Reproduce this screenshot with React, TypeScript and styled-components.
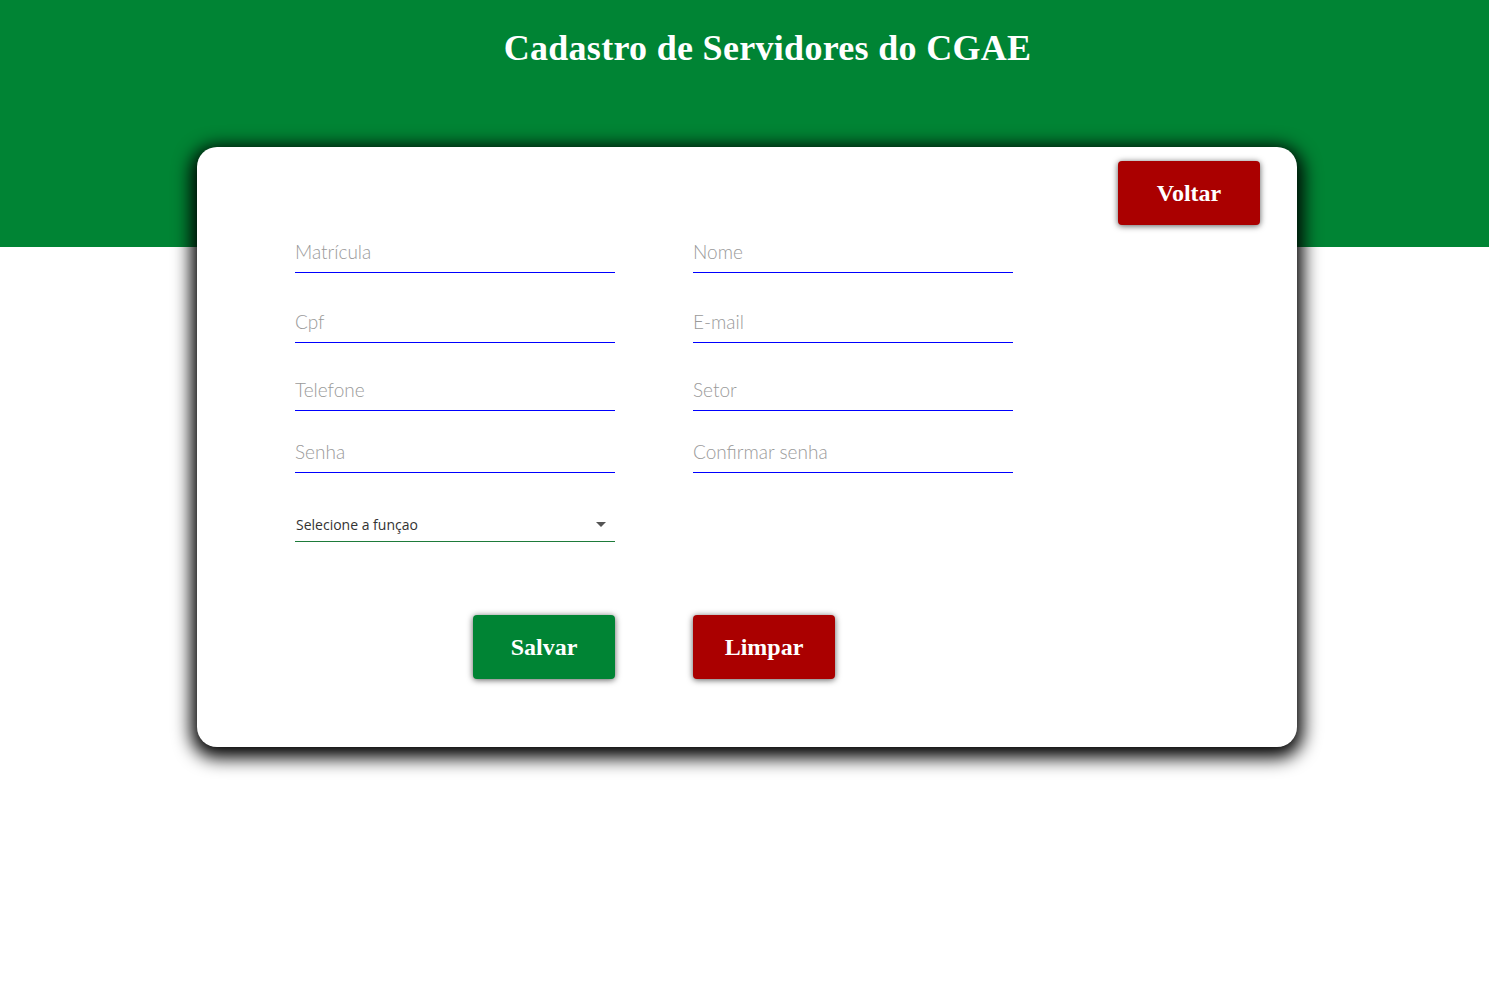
import React from "react";
import styled, { createGlobalStyle } from "styled-components";

const GlobalStyle = createGlobalStyle`
  html, body { margin: 0; padding: 0; background: #ffffff; }
  body { font-family: "Liberation Sans", Arial, sans-serif; }
  * { box-sizing: border-box; }
`;

const Page = styled.div`
  min-height: 997px;
  background: linear-gradient(to bottom, #008434 0, #008434 247px, #ffffff 247px);
  display: flex;
  flex-direction: column;
`;

const Header = styled.header`
  height: 147px;
  padding: 26px 0 0 46px;
  display: flex;
  justify-content: center;
`;

const Title = styled.h1`
  margin: 0;
  font-family: "Liberation Serif", "Times New Roman", serif;
  font-weight: 700;
  font-size: 36px;
  line-height: 44px;
  color: #ffffff;
  letter-spacing: 0.3px;
`;

const Card = styled.main`
  width: 1100px;
  height: 600px;
  margin-left: 197px;
  background: #ffffff;
  border-radius: 20px;
  box-shadow: 0 5px 18px 6px #000000;
  display: flex;
  flex-direction: column;
  padding: 14px 37px 0 98px;
`;

const TopBar = styled.div`
  display: flex;
  justify-content: flex-end;
  height: 64px;
`;

const Button = styled.button<{ $variant: "green" | "red" }>`
  width: 142px;
  height: 64px;
  border: none;
  border-radius: 4px;
  background: ${(p) => (p.$variant === "green" ? "#008434" : "#aa0000")};
  color: #ffffff;
  font-family: "Liberation Serif", "Times New Roman", serif;
  font-weight: 700;
  font-size: 24px;
  box-shadow: 0 1px 6px rgba(0, 0, 0, 0.65);
  cursor: pointer;
`;

const FormGrid = styled.form`
  display: grid;
  grid-template-columns: 320px 320px;
  column-gap: 78px;
  margin-top: 16px;
`;

const Input = styled.input<{ $mt?: number }>`
  margin-top: ${(p) => p.$mt ?? 0}px;
  width: 320px;
  height: 32px;
  border: none;
  border-bottom: 1px solid #0000ff;
  outline: none;
  padding: 0 0 10px 0;
  font-family: "Lato", "DejaVu Sans", sans-serif;
  font-weight: 300;
  font-size: 19px;
  color: #555;
  background: transparent;
  &::placeholder {
    color: #9a9a9a;
    font-weight: 300;
  }
`;

const SelectBox = styled.div`
  margin-top: 39px;
  width: 320px;
  height: 30px;
  border-bottom: 1px solid #1e7b3a;
  display: flex;
  align-items: center;
  padding: 0 9px 4px 1px;
`;

const Select = styled.select`
  flex: 1;
  appearance: none;
  border: none;
  outline: none;
  background: transparent;
  font-family: "Open Sans", "Noto Sans", sans-serif;
  font-size: 14px;
  color: #333333;
  padding: 0;
`;

const Caret = styled.span`
  width: 0;
  height: 0;
  border-left: 5px solid transparent;
  border-right: 5px solid transparent;
  border-top: 5px solid #555555;
`;

const ButtonRow = styled.div`
  grid-column: 1 / span 2;
  display: grid;
  grid-template-columns: 320px 320px;
  column-gap: 78px;
  margin-top: 73px;
`;

const EndCell = styled.div<{ $align: "start" | "end" }>`
  display: flex;
  justify-content: ${(p) => (p.$align === "end" ? "flex-end" : "flex-start")};
`;

export default function App() {
  return (
    <>
      <GlobalStyle />
      <Page>
        <Header>
          <Title>Cadastro de Servidores do CGAE</Title>
        </Header>
        <Card>
          <TopBar>
            <Button $variant="red" type="button">Voltar</Button>
          </TopBar>
          <FormGrid onSubmit={(e) => e.preventDefault()}>
            <Input placeholder="Matrícula" />
            <Input placeholder="Nome" />
            <Input $mt={38} placeholder="Cpf" />
            <Input $mt={38} placeholder="E-mail" />
            <Input $mt={36} placeholder="Telefone" />
            <Input $mt={36} placeholder="Setor" />
            <Input $mt={30} type="password" placeholder="Senha" />
            <Input $mt={30} type="password" placeholder="Confirmar senha" />
            <SelectBox>
              <Select defaultValue="">
                <option value="" disabled>Selecione a funçao</option>
                <option value="1">Professor</option>
                <option value="2">Técnico</option>
              </Select>
              <Caret />
            </SelectBox>
            <div />
            <ButtonRow>
              <EndCell $align="end">
                <Button $variant="green" type="submit">Salvar</Button>
              </EndCell>
              <EndCell $align="start">
                <Button $variant="red" type="reset">Limpar</Button>
              </EndCell>
            </ButtonRow>
          </FormGrid>
        </Card>
      </Page>
    </>
  );
}
